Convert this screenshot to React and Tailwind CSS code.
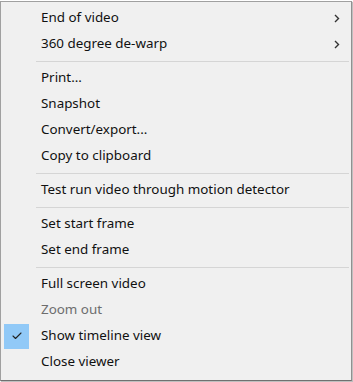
import React from 'react';
import { Check } from 'lucide-react';

const items = [
    { label: 'End of video', sub: true },
    { label: '360 degree de-warp', sub: true },
    { sep: true },
    { label: 'Print...' },
    { label: 'Snapshot' },
    { label: 'Convert/export...' },
    { label: 'Copy to clipboard' },
    { sep: true },
    { label: 'Test run video through motion detector' },
    { sep: true },
    { label: 'Set start frame' },
    { label: 'Set end frame' },
    { sep: true },
    { label: 'Full screen video' },
    { label: 'Zoom out', disabled: true },
    { label: 'Show timeline view', checked: true },
    { label: 'Close viewer' },
];

const Chevron = () => (
    <svg width="6" height="9" viewBox="0 0 6 9" className="text-[#333]">
        <path d="M1 1 L4.5 4.5 L1 8" fill="none" stroke="currentColor" strokeWidth="1.4" />
    </svg>
);

const App = () => {
    return (
        <div className="w-[353px] h-[382px] bg-white pt-px" style={{ fontFamily: '"Noto Sans", "Open Sans", sans-serif' }}>
            <div className="w-[352px] h-[380px] bg-[#f0f0f0] border border-[#a0a0a0] border-b-[#707070] border-r-[#909090] pt-[3px] shadow-[1px_1px_1px_rgba(0,0,0,0.25)]">
                {items.map((it, i) =>
                    it.sep ? (
                        <div key={i} className="h-[8px] flex items-center pl-[35px] pr-[2px]">
                            <div className="h-px w-full bg-[#d5d5d5]" />
                        </div>
                    ) : (
                        <div key={i} className="h-[26px] flex items-center pl-[3px]">
                            <div className={`w-[25px] h-[25px] flex items-center justify-center ${it.checked ? 'bg-[#91c9f7]' : ''}`}>
                                {it.checked && <Check size={12} strokeWidth={2.2} className="text-[#222]" />}
                            </div>
                            <span className={`ml-[12px] flex-1 text-[13.4px] leading-none ${it.disabled ? 'text-[#6d6d6d]' : 'text-[#111]'}`}>
                                {it.label}
                            </span>
                            {it.sub && (
                                <div className="w-[6px] mr-[11px] flex items-center">
                                    <Chevron />
                                </div>
                            )}
                        </div>
                    )
                )}
            </div>
        </div>
    );
};

export default App;
